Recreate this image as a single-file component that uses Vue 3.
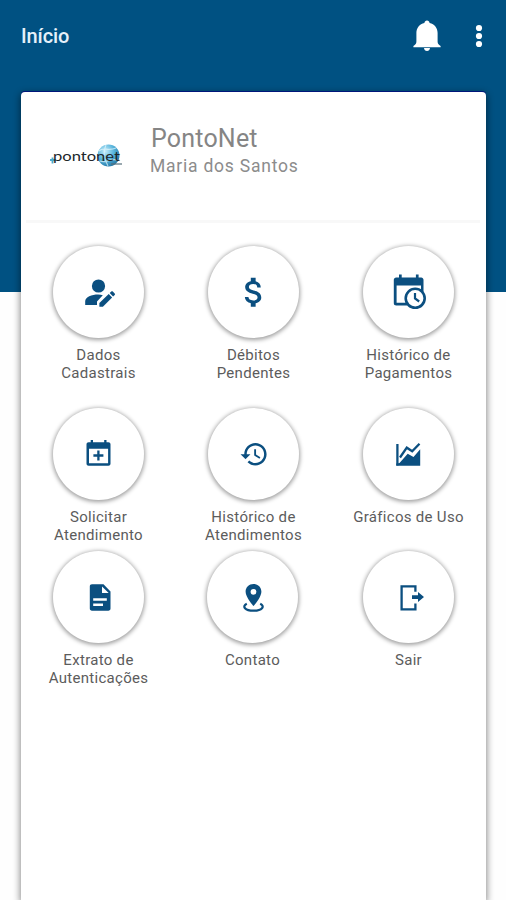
<template>
  <div class="page">
    <header class="toolbar">
      <h1 class="title">Início</h1>
      <div class="actions">
        <button class="action-btn bell" aria-label="Notificações">
          <svg width="28" height="32" viewBox="0 0 28 32">
            <path d="M14 0.5c1.500 0 2.400 1 2.600 2.400C21.500 4 24.600 8 24.600 13v8.600c0 2 .9 3.300 3 4.300v1.300H.4v-1.300c2.100-1 3-2.300 3-4.300V13c0-5 3.100-9 8-10.100C11.600 1.500 12.500.5 14 .5z" />
            <path d="M11 28h6c-.2 2-1.300 3-3 3s-2.800-1-3-3z" />
          </svg>
        </button>
        <button class="action-btn" aria-label="Mais opções">
          <svg width="8" height="24" viewBox="0 0 8 24">
            <circle cx="4" cy="4" r="3.100" />
            <circle cx="4" cy="12" r="3.100" />
            <circle cx="4" cy="20" r="3.100" />
          </svg>
        </button>
      </div>
    </header>

    <main class="card">
      <section class="profile">
        <svg class="logo" width="76" height="28" viewBox="0 0 76 28">
          <defs>
            <radialGradient id="globe" cx="0.35" cy="0.3" r="0.8">
              <stop offset="0" stop-color="#c4ecfa" />
              <stop offset="0.5" stop-color="#57b4dc" />
              <stop offset="1" stop-color="#1c6f9f" />
            </radialGradient>
          </defs>
          <circle cx="59.500" cy="13.500" r="11" fill="url(#globe)" />
          <path d="M50 9c5-5 8 1 17-3M51 19c6 3 9-3 17-1M57 3c-3 6-2 14 2 21" fill="none" stroke="#e4f6fc" stroke-width="1.200" opacity="0.7" />
          <path d="M1 18h5M3.500 15.500v6" fill="none" stroke="#4aa9ce" stroke-width="1.800" />
          <text x="4" y="19" textLength="67" lengthAdjust="spacingAndGlyphs">pontonet</text>
          <path d="M62 22h11" stroke="#58707c" stroke-width="1.200" />
        </svg>
        <div class="profile-text">
          <h2 class="company">PontoNet</h2>
          <p class="user">Maria dos Santos</p>
        </div>
      </section>

      <nav class="menu">
        <div v-for="(row, index) in rows" :key="index" class="menu-row">
          <a v-for="item in row" :key="item.icon" class="menu-item" :class="item.icon">
            <span class="circle">
              <svg width="48" height="48" viewBox="0 0 48 48">
                <template v-if="item.icon === 'user-edit'">
                  <circle cx="23.500" cy="18" r="6.600" />
                  <path d="M10.200 37v-3.700c0-4.200 6.500-6.700 13-6.700 1.800 0 3.200.2 4.600.6L22 33.500V37z" />
                  <path d="M24.400 38.700v-3.600l9.300-9 3.400 3.400-9.200 9.200z" />
                  <path d="M34.700 25.100l1.600-1.600c.5-.5 1-.5 1.500 0l1.900 1.900c.5.5.5 1 0 1.500l-1.600 1.600z" />
                </template>
                <template v-else-if="item.icon === 'money'">
                  <path transform="translate(4.700 4.900) scale(1.610)" d="M11.800 10.900c-2.270-.59-3-1.200-3-2.150 0-1.090 1.010-1.850 2.700-1.850 1.780 0 2.440.85 2.500 2.100h2.210c-.07-1.720-1.120-3.300-3.210-3.810V3h-3v2.160c-1.940.42-3.500 1.680-3.500 3.610 0 2.310 1.910 3.460 4.700 4.130 2.500.6 3 1.480 3 2.410 0 .69-.49 1.790-2.700 1.790-2.060 0-2.870-.92-2.980-2.100h-2.200c.12 2.190 1.760 3.420 3.680 3.830V21h3v-2.150c1.950-.37 3.500-1.500 3.500-3.550 0-2.840-2.430-3.810-4.700-4.400z" />
                </template>
                <template v-else-if="item.icon === 'calendar-clock'">
                  <path fill-rule="evenodd" d="M11.200 9.500H14V6.500h2.700v3h14.200v-3h2.700v3h2.600c1.300 0 2.300 1 2.300 2.300V24H36v-6.500H11.600v17.200H22V37.500H11.200c-1.400 0-2.400-1-2.400-2.300V11.800c0-1.300 1-2.300 2.400-2.300z" />
                  <circle cx="30.200" cy="30.300" r="9.500" class="stroke paper" stroke-width="2.600" />
                  <path d="M30 25v5.500l4.200 3" class="stroke" stroke-width="2.200" />
                </template>
                <template v-else-if="item.icon === 'calendar-plus'">
                  <path fill-rule="evenodd" d="M13.700 12.300h2v-2.400H18v2.400h11.200v-2.400h2.300v2.400h1.900c1.200 0 2.100.8 2.100 2v19.400c0 1.200-.9 2-2.100 2H13.700c-1.300 0-2.200-.8-2.200-2V14.300c0-1.200.9-2 2.200-2zM14 18.800v14.500h19.100V18.800z" />
                  <path d="M23.400 20.500v10M18.400 25.500h10" class="stroke" stroke-width="2.300" />
                </template>
                <template v-else-if="item.icon === 'history'">
                  <path transform="translate(9.300 9.400) scale(1.240)" d="M13 3c-4.970 0-9 4.030-9 9H1l3.890 3.890.07.14L9 12H6c0-3.870 3.130-7 7-7s7 3.130 7 7-3.130 7-7 7c-1.930 0-3.680-.79-4.940-2.060l-1.420 1.420C8.270 19.990 10.510 21 13 21c4.970 0 9-4.030 9-9s-4.030-9-9-9zm-1 5v5l4.280 2.540.72-1.210-3.500-2.080V8H12z" />
                </template>
                <template v-else-if="item.icon === 'chart'">
                  <path d="M12.400 14v21.500" class="stroke" stroke-width="2.300" />
                  <path d="M15 27.500l6.800-9.800 5.400 3.600 7.300-7.600" class="stroke" stroke-width="2.300" />
                  <path d="M11.300 35.700v-2.200l3.200-.5 8.200-9.300 5.800 3.300 6.700-7.800v16.500z" />
                </template>
                <template v-else-if="item.icon === 'document'">
                  <path fill-rule="evenodd" d="M17 11.300h11.500l7 7.200v17c0 1.300-.8 2.200-2.200 2.200H17c-1.400 0-2.200-.9-2.200-2.200v-22c0-1.400.8-2.200 2.200-2.200zM27 13.400v6.600h6.700zM18.200 25.200v2.500h13.600v-2.500zM18.200 30.400v2.500h9.800v-2.500z" />
                </template>
                <template v-else-if="item.icon === 'location'">
                  <path fill-rule="evenodd" d="M24.500 11c4.500 0 7.900 3.300 7.900 7.700 0 5.600-7.900 14.300-7.900 14.300s-7.900-8.700-7.900-14.300c0-4.400 3.400-7.700 7.900-7.700zm0 4.900a2.900 2.900 0 100 5.800 2.900 2.900 0 000-5.800z" />
                  <path d="M17.800 30.700c-5.200 2.700-1.800 7 6.700 7s11.900-4.300 6.700-7" class="stroke" stroke-width="2.200" />
                </template>
                <template v-else>
                  <path d="M30.400 18.700v-5.300H16.600v22.900h13.800V30.500" class="stroke" stroke-width="2.300" />
                  <path d="M27 22.300h6v-3.200l6 5-6 5v-3.200h-6z" />
                </template>
              </svg>
            </span>
            <span class="label">
              <span v-for="line in item.lines" :key="line" class="line">{{ line }}</span>
            </span>
          </a>
        </div>
      </nav>
    </main>
  </div>
</template>


<script setup>
const rows = [
  [
    { icon: 'user-edit', lines: ['Dados', 'Cadastrais'] },
    { icon: 'money', lines: ['Débitos', 'Pendentes'] },
    { icon: 'calendar-clock', lines: ['Histórico de', 'Pagamentos'] },
  ],
  [
    { icon: 'calendar-plus', lines: ['Solicitar', 'Atendimento'] },
    { icon: 'history', lines: ['Histórico de', 'Atendimentos'] },
    { icon: 'chart', lines: ['Gráficos de Uso'] },
  ],
  [
    { icon: 'document', lines: ['Extrato de', 'Autenticações'] },
    { icon: 'location', lines: ['Contato'] },
    { icon: 'exit', lines: ['Sair'] },
  ],
];
</script>


<style>
body {
  margin: 0;
  background-color: #fff;
}
</style>

<style scoped>
.page {
  height: 900px;
  box-sizing: border-box;
  padding: 0 20px 0 21px;
  display: flex;
  flex-direction: column;
  overflow: hidden;
  background: linear-gradient(#005182 292px, #fefefe 292px);
  font-family: Roboto, sans-serif;
}

.toolbar {
  flex: none;
  height: 92px;
  box-sizing: border-box;
  padding-bottom: 21px;
  display: flex;
  align-items: center;
  justify-content: space-between;
}

.title {
  margin: 0;
  color: #e6f0fa;
  font-size: 20px;
  font-weight: 500;
  letter-spacing: -0.1px;
}

.actions {
  display: flex;
  align-items: center;
  gap: 34px;
  padding-right: 3px;
}

.action-btn {
  display: flex;
  padding: 0;
  border: none;
  background: none;
  fill: #fff;
  cursor: pointer;
}

.card {
  flex: 1;
  background-color: #fff;
  border-radius: 4px 4px 0 0;
  box-shadow: 0 -1px 0 #00167a, 0 2px 7px 1px rgba(0, 0, 0, 0.45);
}

.profile {
  height: 131px;
  box-sizing: border-box;
  margin: 0 6px 0 5px;
  padding: 31px 0 0 23px;
  display: flex;
  align-items: flex-start;
  gap: 25px;
  border-bottom: 3px solid #f8f8f8;
}

.logo {
  margin-top: 19px;
  overflow: visible;
}

.logo text {
  font-family: Lato, sans-serif;
  font-size: 14px;
  font-weight: 400;
  fill: #20262a;
}

.company {
  margin: 0;
  padding-left: 1px;
  color: #858585;
  font-size: 25px;
  font-weight: 400;
  line-height: 31px;
  letter-spacing: 0.2px;
}

.user {
  margin: 0;
  color: #8c8c8c;
  font-size: 17.500px;
  line-height: 24px;
  letter-spacing: 0.77px;
}

.menu {
  padding-top: 23px;
}

.menu-row {
  display: grid;
  grid-template-columns: repeat(3, 1fr);
  height: 162px;
}

.menu-row:nth-child(2) {
  height: 143px;
}

.menu-item {
  display: flex;
  flex-direction: column;
  align-items: center;
}

.location {
  padding-right: 2px;
}

.circle {
  width: 91px;
  height: 92px;
  display: flex;
  align-items: center;
  justify-content: center;
  border-radius: 50%;
  background-color: #fff;
  box-shadow: 0 1px 4px 1px rgba(0, 0, 0, 0.38);
}

.circle svg {
  fill: #0b4f80;
}

.stroke {
  fill: none;
  stroke: #0b4f80;
}

.circle svg .stroke.paper {
  fill: #fff;
}

.label {
  margin-top: 8px;
  display: flex;
  flex-direction: column;
  align-items: center;
  color: #5c5c5c;
  font-size: 15px;
  line-height: 18px;
  letter-spacing: 0.3px;
}

.line {
  white-space: nowrap;
}
</style>
